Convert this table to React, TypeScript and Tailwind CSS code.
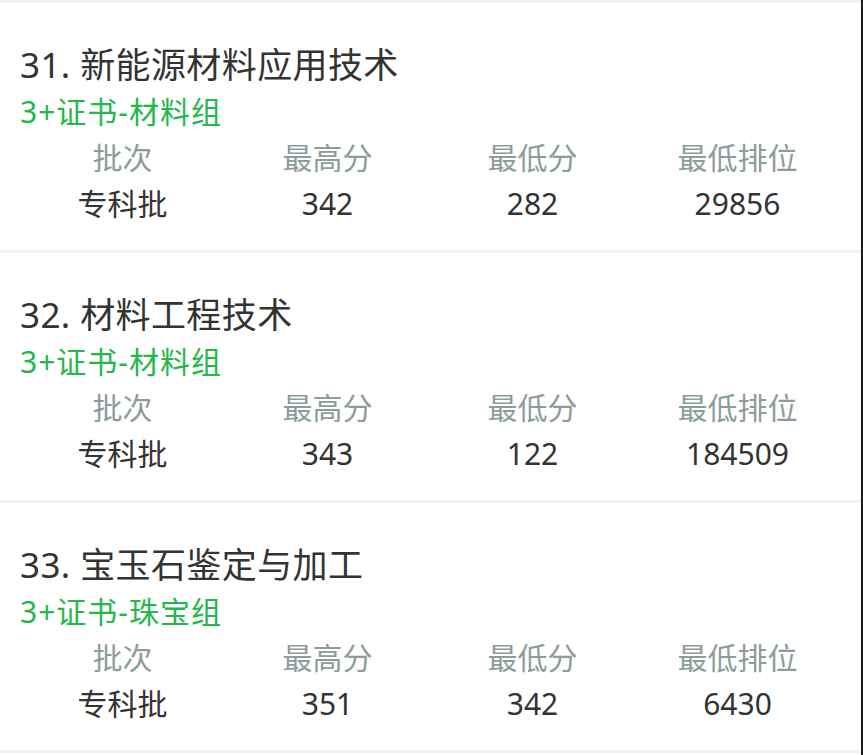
const majors = [
  {
    no: 31,
    name: "新能源材料应用技术",
    group: "3+证书-材料组",
    batch: "专科批",
    high: "342",
    low: "282",
    rank: "29856",
  },
  {
    no: 32,
    name: "材料工程技术",
    group: "3+证书-材料组",
    batch: "专科批",
    high: "343",
    low: "122",
    rank: "184509",
  },
  {
    no: 33,
    name: "宝玉石鉴定与加工",
    group: "3+证书-珠宝组",
    batch: "专科批",
    high: "351",
    low: "342",
    rank: "6430",
  },
];

const labels = ["批次", "最高分", "最低分", "最低排位"];

export default function App() {
  return (
    <div
      className="flex h-[755px] w-[863px] overflow-hidden bg-white"
      style={{ fontFamily: '"Noto Sans", "Noto Sans CJK SC", sans-serif' }}
    >
      <div className="flex flex-1 flex-col">
        <div className="h-[3px] bg-[#f1f1f1]" />
        {majors.map((m) => (
          <div key={m.no}>
            <section className="h-[247px] pl-5 pr-[21px] pt-[38px]">
              <h2 className="text-[35px] leading-[47px] tracking-[0.4px] text-[#333333]">
                {m.no}. {m.name}
              </h2>
              <p className="text-[30px] leading-[47px] tracking-[1px] text-[#22b84a]">{m.group}</p>
              <div className="grid grid-cols-4 text-center text-[30px] leading-[46px]">
                {labels.map((l) => (
                  <div key={l} className="text-[#8c9c9a]">
                    {l}
                  </div>
                ))}
                {[m.batch, m.high, m.low, m.rank].map((v, i) => (
                  <div key={i} className="text-[#333333]">
                    {v}
                  </div>
                ))}
              </div>
            </section>
            <div className="h-[3px] bg-[#f1f1f1]" />
          </div>
        ))}
      </div>
      <div className="w-[2px] bg-[#1a1a1a]" />
    </div>
  );
}
